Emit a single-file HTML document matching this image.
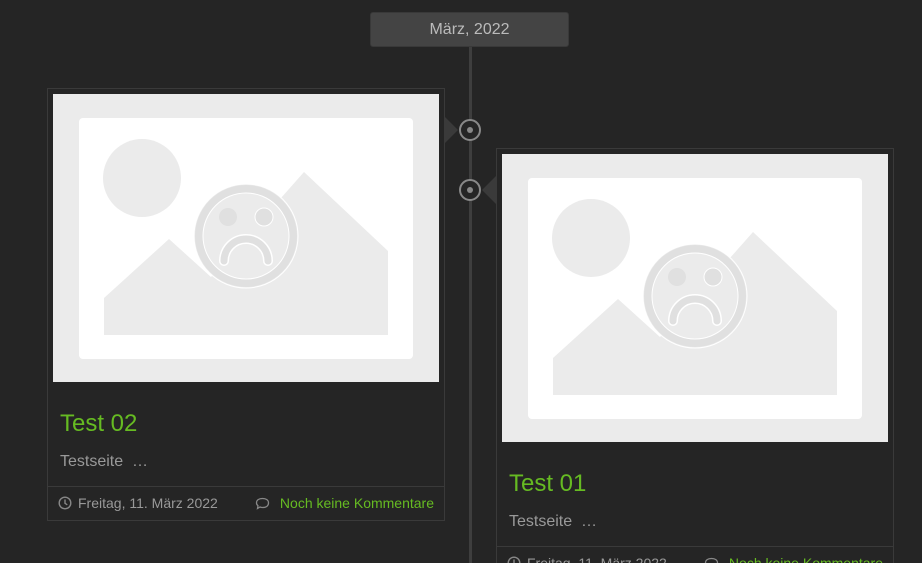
<!DOCTYPE html>
<html><head><meta charset="utf-8"><style>
html,body{margin:0;width:922px;height:563px;overflow:hidden}
body{background:#252525;position:relative;font-family:"Liberation Sans",sans-serif}
.line{position:absolute;left:469px;top:46px;width:3px;height:520px;background:#3e3e3e}
.date{position:absolute;left:370px;top:12px;width:197px;height:33px;background:#444;border:1px solid #393939;border-radius:3px;color:#bbb;font-size:16px;line-height:33px;text-align:center}
.card{position:absolute;width:396px;border:1px solid #3a3a3a;background:#252525}
.img{margin:5px;width:386px;height:288px;background:#ebebeb;display:block}
.t{color:#66bb22;font-size:24px;margin:27px 0 0 12px;line-height:30px}
.x{color:#999;font-size:16px;margin:13px 0 0 12px;line-height:20px}
.f{border-top:1px solid #3a3a3a;margin-top:14px;height:33px;position:relative;font-size:14px;color:#999}
.f .d{position:absolute;left:10px;top:8px;display:flex;align-items:center;gap:6px}
.f .c{position:absolute;right:10px;top:8px;display:flex;align-items:center;gap:10px;color:#66bb22}
.dot{position:absolute;width:18px;height:18px;border:2px solid #888;border-radius:50%;background:#252525}
.dot::after{content:"";position:absolute;left:6px;top:6px;width:6px;height:6px;border-radius:50%;background:#888}
</style></head><body>
<div class="line"></div>
<div class="date">März, 2022</div>
<svg style="position:absolute;left:0;top:0" width="922" height="563">
<polygon points="444,116 458,130 444,144" fill="#3a3a3a"/>
<polygon points="496,176 482,190 496,204" fill="#3a3a3a"/>
</svg>
<div class="dot" style="left:459px;top:119px"></div>
<div class="dot" style="left:459px;top:179px"></div>

<svg width="0" height="0" style="position:absolute"><defs>
<g id="ph">
<rect width="386" height="288" fill="#ebebeb"/>
<rect x="26" y="24" width="334" height="241" rx="4" fill="#fff"/>
<circle cx="89" cy="84" r="39" fill="#ebebeb"/>
<polygon points="51,204 116,145 158,183 251,78 335,157 335,241 51,241" fill="#ebebeb"/>
<circle cx="193" cy="142" r="52" fill="#ebebeb" stroke="#fff" stroke-width="1"/>
<circle cx="193" cy="142" r="47" fill="none" stroke="#e0e0e0" stroke-width="8"/>
<circle cx="193" cy="142" r="43" fill="none" stroke="#fff" stroke-width="1"/>
<circle cx="175" cy="123" r="9" fill="#e0e0e0"/>
<circle cx="211" cy="123" r="9" fill="#e0e0e0" stroke="#fff" stroke-width="1"/>
<path d="M171,167 A22,22 0 0 1 215,167" fill="none" stroke="#fff" stroke-width="10" stroke-linecap="round"/>
<path d="M171,167 A22,22 0 0 1 215,167" fill="none" stroke="#e0e0e0" stroke-width="7" stroke-linecap="round"/>
</g>
<g id="clk"><circle cx="7" cy="7" r="5.8" fill="none" stroke="#888" stroke-width="1.4"/><path d="M7,3.5V7.3L9.3,8.8" fill="none" stroke="#888" stroke-width="1.4"/></g>
<g id="bub"><path d="M7.5,2.5C11.5,2.5 13.5,4.5 13.5,7S11.5,11.5 7.5,11.5C6.5,11.5 5.6,11.3 5,11L2.5,12.5 3,9.7C2,8.9 1.5,8 1.5,7 1.5,4.5 3.5,2.5 7.5,2.5Z" fill="none" stroke="#888" stroke-width="1.3"/></g>
</defs></svg>

<div class="card" style="left:47px;top:88px">
<svg class="img" viewBox="0 0 386 288"><use href="#ph"/></svg>
<div class="t">Test 02</div>
<div class="x">Testseite &nbsp;…</div>
<div class="f"><span class="d"><svg width="14" height="14"><use href="#clk"/></svg>Freitag, 11. März 2022</span><span class="c"><svg width="15" height="14"><use href="#bub"/></svg>Noch keine Kommentare</span></div>
</div>

<div class="card" style="left:496px;top:148px">
<svg class="img" viewBox="0 0 386 288"><use href="#ph"/></svg>
<div class="t">Test 01</div>
<div class="x">Testseite &nbsp;…</div>
<div class="f"><span class="d"><svg width="14" height="14"><use href="#clk"/></svg>Freitag, 11. März 2022</span><span class="c"><svg width="15" height="14"><use href="#bub"/></svg>Noch keine Kommentare</span></div>
</div>
</body></html>
